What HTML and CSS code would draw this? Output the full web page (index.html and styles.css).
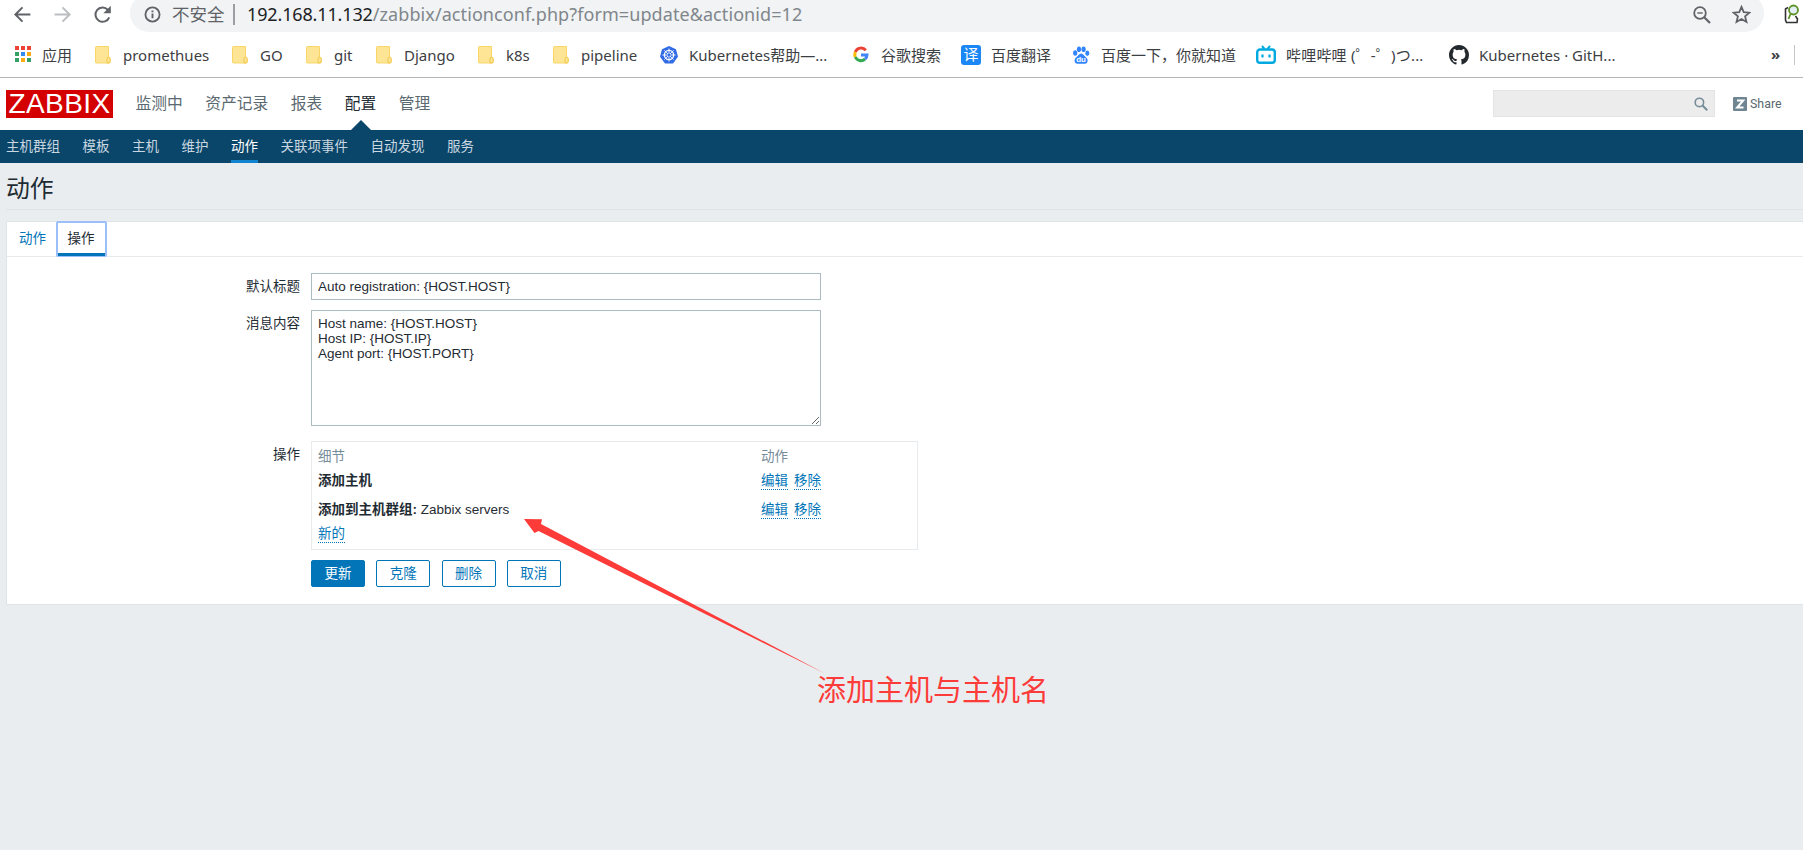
FILE: index.html
```html
<!DOCTYPE html>
<html lang="zh-CN">
<head>
  <meta charset="UTF-8">
  <title>动作</title>
  <link rel="stylesheet" href="styles.css">
</head>
<body>
  <div class="toolbar">
    <svg class="nav-icon" viewBox="0 0 24 24"><path d="M22 12H3M12 3l-9 9 9 9" fill="none" stroke="#5f6368" stroke-width="2.5"/></svg>
    <svg class="nav-icon" viewBox="0 0 24 24"><path d="M2 12h19M12 3l9 9-9 9" fill="none" stroke="#bcbec1" stroke-width="2.5"/></svg>
    <svg class="nav-icon" viewBox="0 0 24 24"><path d="M20.5 15.5A9 9 0 1 1 18.700 6" fill="none" stroke="#5f6368" stroke-width="2.500"/><path d="M22.500 1v9.500H13z" fill="#5f6368"/></svg>
    <div class="omnibox">
      <svg class="info-icon" viewBox="0 0 18 18"><circle cx="9" cy="9" r="7.500" fill="none" stroke="#5f6368" stroke-width="1.900"/><path d="M9 8v5M9 4.700v2" stroke="#5f6368" stroke-width="2"/></svg>
      <span class="insecure">不安全</span>
      <span class="url"><b>192.168.11.132</b>/zabbix/actionconf.php?form=update&amp;actionid=12</span>
      <svg class="zoom-icon" viewBox="0 0 18 18"><circle cx="7" cy="7" r="5.800" fill="none" stroke="#5f6368" stroke-width="1.800"/><path d="M4.300 7h5.400" stroke="#5f6368" stroke-width="1.400"/><path d="M11 11l6 6" stroke="#5f6368" stroke-width="2.200"/></svg>
      <svg class="star-icon" viewBox="0 0 18 18"><path d="M9 1.800l2.100 5 5.400.5-4.100 3.500 1.300 5.300L9 13.300l-4.700 2.800 1.300-5.300-4.100-3.500 5.400-.5z" fill="none" stroke="#5f6368" stroke-width="1.700"/></svg>
    </div>
    <svg class="ext-icon" viewBox="0 0 16 20"><path d="M4 3.500L1.500 5v11l1 2.500H13l.5-3.500-2-3" fill="none" stroke="#333" stroke-width="1.600"/><circle cx="9.500" cy="6" r="4.500" fill="#e4eef8" stroke="#5c9126" stroke-width="1.800"/><path d="M6.500 10L4.500 15" stroke="#5c9126" stroke-width="1.800"/></svg>
  </div>

  <div class="bookmarks">
    <div class="bookmark"><svg viewBox="0 0 20 20"><path fill="#ea4335" d="M2 1h4v4H2zM8 1h4v4H8zM14 1h4v4h-4z"/><path fill="#34a064" d="M2 7h4v4H2zM2 13h4v4H2z"/><path fill="#2f8bf0" d="M8 7h4v4H8z"/><path fill="#fbab10" d="M14 7h4v4h-4zM8 13h4v4H8z"/><path fill="#34a064" d="M14 13h4v4h-4z"/></svg><span>应用</span></div>
    <div class="bookmark"><svg viewBox="0 0 20 20"><use href="#folder"/></svg><span>promethues</span></div>
    <div class="bookmark"><svg viewBox="0 0 20 20"><use href="#folder"/></svg><span>GO</span></div>
    <div class="bookmark"><svg viewBox="0 0 20 20"><use href="#folder"/></svg><span>git</span></div>
    <div class="bookmark"><svg viewBox="0 0 20 20"><use href="#folder"/></svg><span>Django</span></div>
    <div class="bookmark"><svg viewBox="0 0 20 20"><use href="#folder"/></svg><span>k8s</span></div>
    <div class="bookmark"><svg viewBox="0 0 20 20"><use href="#folder"/></svg><span>pipeline</span></div>
    <div class="bookmark"><svg viewBox="0 0 20 20"><path d="M10 1l7 3.300 2 7.500-5 6.700H6l-5-6.700 2-7.500z" fill="#326ce5"/><circle cx="10" cy="10" r="4.600" fill="none" stroke="#fff" stroke-width="1.300"/><path d="M10 3.500v13M3.500 10h13M5.400 5.400l9.200 9.200M14.600 5.400l-9.200 9.200" stroke="#fff" stroke-width=".9"/><circle cx="10" cy="10" r="1.200" fill="#326ce5"/></svg><span>Kubernetes帮助—...</span></div>
    <div class="bookmark"><svg viewBox="0 0 20 20"><g fill="none" stroke-width="3"><path d="M14.800 5.200A6.200 6.200 0 0 0 4.300 7" stroke="#ea4335"/><path d="M4.300 7a6.200 6.200 0 0 0 0 5" stroke="#fbbc05"/><path d="M4.300 12a6.200 6.200 0 0 0 9.700 2.200" stroke="#34a853"/><path d="M14 14.200a6 6 0 0 0 2-4.200h-6" stroke="#4285f4"/></g></svg><span>谷歌搜索</span></div>
    <div class="bookmark"><i class="fanyi">译</i><span>百度翻译</span></div>
    <div class="bookmark"><svg viewBox="0 0 20 20"><g fill="#3385ff"><ellipse cx="4.200" cy="8" rx="2.100" ry="2.800"/><ellipse cx="8" cy="4.300" rx="2.100" ry="2.800"/><ellipse cx="12.600" cy="4.300" rx="2.100" ry="2.800"/><ellipse cx="16.300" cy="8.300" rx="2" ry="2.700"/><path d="M10.200 8.500c2 0 3 2.500 5 4 2 1.600 2.200 6-1.200 6.300H6.500C2.800 18.500 3 14 5 12.500c2-1.500 3-4 5.200-4z"/></g><text class="du" x="5.200" y="17">du</text></svg><span>百度一下，你就知道</span></div>
    <div class="bookmark"><svg viewBox="0 0 20 20"><path d="M6 1l2.500 3M14 1l-2.500 3" stroke="#00a9e0" stroke-width="2"/><rect x="1.200" y="4.500" width="17.600" height="13.300" rx="2.800" fill="none" stroke="#00a9e0" stroke-width="2.400"/><path d="M6.500 9.500v3M13.500 9.500v3" stroke="#00a9e0" stroke-width="2.200"/></svg><span>哔哩哔哩 (゜-゜)つ...</span></div>
    <div class="bookmark"><svg viewBox="0 0 16 16"><path fill="#24292e" d="M8 0C3.580 0 0 3.580 0 8c0 3.540 2.290 6.530 5.470 7.590.4.070.55-.17.55-.38 0-.19-.01-.82-.01-1.490-2.010.37-2.530-.49-2.690-.94-.09-.23-.48-.94-.82-1.130-.28-.15-.68-.52-.01-.53.63-.01 1.080.58 1.230.82.72 1.210 1.870.87 2.330.66.07-.52.28-.87.51-1.070-1.780-.2-3.640-.89-3.640-3.950 0-.87.31-1.590.82-2.150-.08-.2-.36-1.020.08-2.120 0 0 .67-.21 2.200.82a7.600 7.600 0 0 1 4 0c1.530-1.040 2.200-.82 2.200-.82.44 1.100.16 1.920.08 2.120.51.56.82 1.270.82 2.150 0 3.070-1.870 3.750-3.650 3.950.29.25.54.73.54 1.480 0 1.070-.01 1.930-.01 2.200 0 .21.15.46.55.38A8 8 0 0 0 16 8c0-4.420-3.580-8-8-8z"/></svg><span>Kubernetes · GitH...</span></div>
    <span class="more">»</span>
  </div>

  <svg class="defs">
    <g id="folder">
      <path d="M3.500 1.500h12v11l1.500 1v4.500H3.500a1 1 0 0 1-1-1v-14.500a1 1 0 0 1 1-1z" fill="#fee595" stroke="#f8d668"/>
      <path d="M14 18v-4.200a1.500 1.500 0 0 1 3.200 0V16a2 2 0 0 1-2 2z" fill="#fee595" stroke="#f2c84a"/>
    </g>
  </svg>

  <header class="header">
    <div class="logo">ZABBIX</div>
    <nav class="top-nav">
      <a>监测中</a>
      <a>资产记录</a>
      <a>报表</a>
      <a class="selected">配置</a>
      <a>管理</a>
    </nav>
    <div class="search">
      <svg viewBox="0 0 14 14"><circle cx="5.400" cy="5.400" r="4.200" fill="none" stroke="#768d99" stroke-width="1.600"/><path d="M8.500 8.500l4.700 4.700" stroke="#768d99" stroke-width="2"/></svg>
    </div>
    <a class="share"><svg viewBox="0 0 14 14"><rect width="14" height="14" rx="1" fill="#6f8591"/><path d="M4 3.500h6.200L4.200 10.500h6.300" fill="none" stroke="#fff" stroke-width="2"/></svg>Share</a>
  </header>
  <nav class="sub-nav">
    <a>主机群组</a>
    <a>模板</a>
    <a>主机</a>
    <a>维护</a>
    <a class="selected">动作</a>
    <a>关联项事件</a>
    <a>自动发现</a>
    <a>服务</a>
  </nav>

  <main class="article">
    <h1>动作</h1>
    <div class="panel">
      <div class="tabs">
        <a class="tab">动作</a>
        <a class="tab active">操作</a>
      </div>
      <form class="form">
        <label for="title">默认标题</label>
        <input type="text" id="title" value="Auto registration: {HOST.HOST}">

        <label for="message">消息内容</label>
        <textarea id="message">Host name: {HOST.HOST}
Host IP: {HOST.IP}
Agent port: {HOST.PORT}</textarea>

        <label>操作</label>
        <div class="operations">
          <div class="row head"><span>细节</span><span>动作</span></div>
          <div class="row"><span><b>添加主机</b></span><span class="links"><a class="link">编辑</a><a class="link">移除</a></span></div>
          <div class="row last"><span><b>添加到主机群组:</b> Zabbix servers</span><span class="links"><a class="link">编辑</a><a class="link">移除</a></span></div>
          <div class="row new"><a class="link">新的</a></div>
        </div>

        <div class="buttons">
          <button type="button" class="primary">更新</button>
          <button type="button">克隆</button>
          <button type="button">删除</button>
          <button type="button">取消</button>
        </div>
      </form>
    </div>
  </main>

  <svg class="arrow" viewBox="0 0 302 156"><path d="M0 0l18 .3-1 4.700L301 154.500 14.500 12l-4 2z" fill="#fd3b39"/></svg>
  <div class="note">添加主机与主机名</div>
</body>
</html>
```
FILE: styles.css
```css
* {
  box-sizing: border-box;
}
body {
  margin: 0;
  height: 850px;
  overflow: hidden;
  background: #e9edf0;
  color: #1f2c33;
  font-family: "Liberation Sans", "Noto Sans CJK SC", sans-serif;
  font-size: 13.5px;
  white-space: nowrap;
}
.defs {
  display: none;
}

/* browser bar */
.toolbar {
  display: flex;
  height: 32px;
  padding-left: 13px;
  background: #fff;
  font-family: "Noto Sans", "Noto Sans CJK SC", sans-serif;
}
.nav-icon {
  width: 19px;
  height: 19px;
  margin: 5px 21px 0 0;
}
.omnibox {
  display: flex;
  align-items: center;
  width: 1634px;
  height: 38px;
  margin: -6px 20px 0 -3px;
  padding: 3px 13px 0 14px;
  border-radius: 19px;
  background: #f1f3f4;
  font-size: 17.5px;
  line-height: 24px;
}
.info-icon {
  width: 17px;
  height: 17px;
  margin-right: 11px;
}
.insecure {
  width: 63px;
  height: 21px;
  line-height: 20px;
  margin-right: 12px;
  border-right: 2px solid #9b9ea2;
  color: #5f6368;
}
.url {
  flex: 1;
  height: 26px;
  color: #80868b;
  font-size: 18px;
  letter-spacing: .08px;
}
.url b {
  font-weight: normal;
  letter-spacing: -.14px;
  color: #202124;
}
.zoom-icon {
  width: 18px;
  height: 18px;
  margin-right: 21px;
}
.star-icon {
  width: 19px;
  height: 19px;
}
.ext-icon {
  width: 16px;
  height: 20px;
  margin-top: 4px;
}

.bookmarks {
  display: flex;
  align-items: center;
  height: 46px;
  padding: 0 0 0 13px;
  border-bottom: 1px solid #b4b5b6;
  background: #fff;
  color: #3c4043;
  font-family: "Noto Sans", "Noto Sans CJK SC", sans-serif;
  font-size: 15px;
}
.bookmark {
  display: flex;
  align-items: center;
  gap: 10px;
  flex: none;
  width: 108px;
}
.bookmark svg {
  width: 20px;
  height: 20px;
  flex: none;
}
.bookmark:nth-child(1) { width: 80px; gap: 9px; }
.bookmark:nth-child(2) { width: 137px; }
.bookmark:nth-child(3) { width: 74px; }
.bookmark:nth-child(4) { width: 70px; }
.bookmark:nth-child(5) { width: 102px; }
.bookmark:nth-child(6) { width: 75px; }
.bookmark:nth-child(8) { width: 192px; }
.bookmark:nth-child(9) { width: 110px; }
.bookmark:nth-child(10) { width: 110px; }
.bookmark:nth-child(11) { width: 185px; }
.bookmark:nth-child(12) { width: 193px; letter-spacing: .2px; }
.bookmark:nth-child(13) { width: 322px; }
.fanyi {
  width: 20px;
  height: 20px;
  border-radius: 3px;
  background: #1a87f5;
  color: #fff;
  font-size: 15px;
  font-style: normal;
  line-height: 19px;
  text-align: center;
}
.du {
  fill: #fff;
  font: bold 8px "Liberation Sans", sans-serif;
}
.more {
  width: 24px;
  height: 20px;
  border-right: 1px solid #c4c6c8;
  font-size: 15px;
  font-weight: bold;
  line-height: 18px;
}

/* page header */
.header {
  display: flex;
  align-items: center;
  height: 52px;
  padding-left: 6px;
  background: #fff;
}
.logo {
  width: 107px;
  height: 28px;
  margin-right: 22.5px;
  background: #d40000;
  color: #fff;
  font-size: 28px;
  letter-spacing: .4px;
  line-height: 28px;
  text-align: center;
}
.top-nav {
  display: flex;
  flex: 1;
  gap: 22.5px;
  font-size: 15.75px;
  line-height: 52px;
  color: #5b6970;
}
.top-nav .selected {
  position: relative;
  color: #1f2c33;
}
.top-nav .selected::after {
  content: "";
  position: absolute;
  left: 6px;
  bottom: 0;
  border: 10px solid transparent;
  border-top: 0;
  border-bottom-color: #0a466a;
}
.search {
  display: flex;
  align-items: center;
  justify-content: flex-end;
  width: 222px;
  height: 27px;
  margin-bottom: 1px;
  padding-right: 6px;
  border: 1px solid #e2e4e5;
  background: #ececec;
}
.search svg {
  width: 14px;
  height: 14px;
}
.share {
  display: flex;
  align-items: center;
  gap: 3px;
  width: 88px;
  margin-bottom: 1px;
  padding-left: 18px;
  color: #5b6970;
  font-family: Roboto, sans-serif;
  font-size: 12.4px;
}
.share svg {
  width: 14px;
  height: 14px;
}
.sub-nav {
  display: flex;
  gap: 22.5px;
  height: 33px;
  padding-left: 6px;
  background: #0a466a;
  color: #c9d7e0;
  line-height: 33px;
}
.sub-nav .selected {
  border-bottom: 3px solid #1283cf;
  color: #fff;
}

/* content */
.article {
  padding-left: 6px;
}
h1 {
  height: 47px;
  margin: 0 0 11px;
  border-bottom: 1px solid #dfe4e7;
  font-size: 23.8px;
  font-weight: normal;
  line-height: 52px;
}
.panel {
  height: 384px;
  border: 1px solid #dfe4e7;
  border-right: 0;
  background: #fff;
}
.tabs {
  display: flex;
  height: 35px;
  border-bottom: 1px solid #e6eaed;
}
.tab {
  height: 35px;
  padding: 0 10px 0 12px;
  color: #0275b8;
  line-height: 33px;
}
.tab.active {
  width: 51px;
  height: 36px;
  margin-top: -1px;
  border: 2px solid #9abffb;
  border-bottom-width: 1px;
  border-radius: 2px;
  box-shadow: inset 0 -3px #0275b8;
  color: #1f2c33;
  line-height: 31px;
  padding: 0 9.5px;
}
.form {
  display: grid;
  grid-template-columns: 293px 607px;
  column-gap: 11px;
  padding-top: 16px;
}
label {
  text-align: right;
  line-height: 27px;
}
input, textarea {
  display: block;
  width: 510px;
  height: 27px;
  margin: 0 0 10px;
  padding: 0 6px;
  border: 1px solid #acbbc2;
  color: #1f2c33;
  font: 13.5px "Liberation Sans", sans-serif;
}
textarea {
  height: 116px;
  margin-bottom: 15px;
  padding: 5px 6px;
  line-height: 15px;
  resize: both;
}
.operations {
  height: 109px;
  padding: 5px 6px;
  border: 1px solid #e8ebed;
}
.row {
  display: grid;
  grid-template-columns: 443px 1fr;
  height: 24px;
  line-height: 20px;
}
.head {
  color: #768d99;
}
.row.last {
  padding-top: 5px;
  height: 29px;
}
.row b {
  font-weight: bold;
}
.links {
  display: flex;
  gap: 6px;
}
.link {
  justify-self: start;
  height: 19px;
  border-bottom: 1px dotted #0275b8;
  color: #0275b8;
}
.buttons {
  grid-column: 2;
  display: flex;
  gap: 11.25px;
  margin-top: 10px;
}
button {
  width: 54px;
  height: 27px;
  padding: 0;
  border: 1px solid #0275b8;
  border-radius: 2px;
  background: #fff;
  color: #0275b8;
  font: 13.5px/25px "Liberation Sans", "Noto Sans CJK SC", sans-serif;
}
button.primary {
  background: #0275b8;
  color: #fff;
}

/* annotation over the page */
.arrow {
  position: absolute;
  left: 524px;
  top: 519px;
  width: 302px;
  height: 156px;
}
.note {
  position: absolute;
  left: 817px;
  top: 670px;
  color: #fd3b39;
  font-size: 29px;
  line-height: 42px;
}
```
